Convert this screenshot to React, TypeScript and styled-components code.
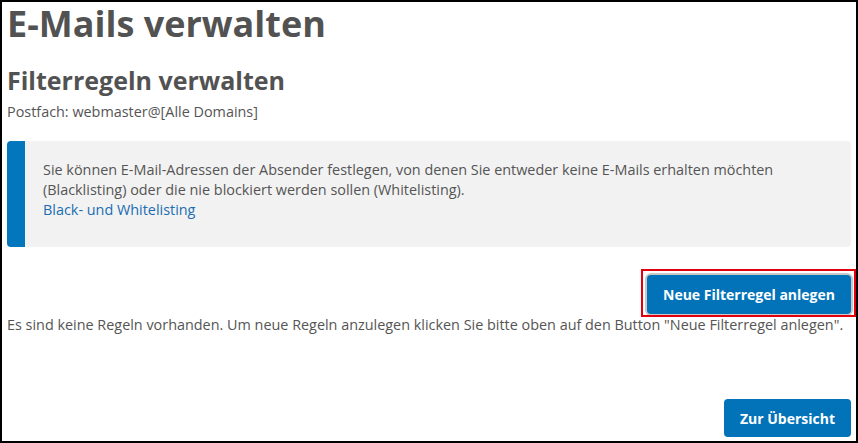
import styled, { createGlobalStyle } from 'styled-components';

const GlobalStyle = createGlobalStyle`
  html, body {
    margin: 0;
    padding: 0;
    background: #fff;
  }
  body {
    font-family: 'Open Sans', 'Noto Sans', sans-serif;
    color: #555;
  }
`;

const Frame = styled.main`
  box-sizing: border-box;
  width: 858px;
  height: 443px;
  border: 2px solid #000;
  padding: 0 5px 4px 5px;
  display: flex;
  flex-direction: column;
`;

const Title = styled.h1`
  font-size: 36px;
  font-weight: 700;
  line-height: 44px;
  color: #525252;
  margin: 0;
`;

const Subtitle = styled.h2`
  font-size: 25px;
  font-weight: 700;
  line-height: 32px;
  color: #525252;
  margin: 18px 0 0 0;
`;

const Mailbox = styled.p`
  font-size: 14.4px;
  line-height: 20px;
  margin: 6px 0 0 0;
`;

const InfoBox = styled.section`
  display: flex;
  margin-top: 19px;
  background: #f2f2f2;
  border-radius: 4px;
  overflow: hidden;
`;

const InfoBar = styled.div`
  width: 18px;
  flex: none;
  background: #0277bd;
`;

const InfoText = styled.div`
  padding: 19px 18px 27px 18px;
  font-size: 14.4px;
  line-height: 20px;
  color: #555;
`;

const InfoLink = styled.a`
  color: #1a6db3;
  text-decoration: none;
`;

const ActionRow = styled.div`
  display: flex;
  justify-content: flex-end;
  margin-top: 28px;
`;

const Highlight = styled.div`
  position: relative;
  &::after {
    content: '';
    position: absolute;
    top: -6px;
    left: -6px;
    right: -5px;
    bottom: -3px;
    border: 2px solid #e2000f;
    pointer-events: none;
  }
`;

const Button = styled.button<{ $focused?: boolean }>`
  font-family: 'Open Sans', 'Noto Sans', sans-serif;
  font-size: 14px;
  font-weight: 700;
  color: #fff;
  background: #0273b8;
  border: none;
  border-radius: 4px;
  height: ${(p) => (p.$focused ? '39px' : '38px')};
  padding: 0 16px;
  cursor: pointer;
  box-shadow: ${(p) => (p.$focused ? '0 0 0 2px #c9c9c9' : 'none')};
`;

const EmptyNote = styled.p`
  font-size: 14.4px;
  line-height: 20px;
  margin: 1px 0 0 0;
`;

const Footer = styled.div`
  margin-top: auto;
  display: flex;
  justify-content: flex-end;
`;

export default function App() {
  return (
    <>
      <GlobalStyle />
      <Frame>
        <Title>E-Mails verwalten</Title>
        <Subtitle>Filterregeln verwalten</Subtitle>
        <Mailbox>Postfach: webmaster@[Alle Domains]</Mailbox>
        <InfoBox>
          <InfoBar />
          <InfoText>
            Sie können E-Mail-Adressen der Absender festlegen, von denen Sie entweder keine E-Mails erhalten möchten
            (Blacklisting) oder die nie blockiert werden sollen (Whitelisting).
            <br />
            <InfoLink href="#">Black- und Whitelisting</InfoLink>
          </InfoText>
        </InfoBox>
        <ActionRow>
          <Highlight>
            <Button $focused>Neue Filterregel anlegen</Button>
          </Highlight>
        </ActionRow>
        <EmptyNote>
          Es sind keine Regeln vorhanden. Um neue Regeln anzulegen klicken Sie bitte oben auf den Button "Neue
          Filterregel anlegen".
        </EmptyNote>
        <Footer>
          <Button>Zur Übersicht</Button>
        </Footer>
      </Frame>
    </>
  );
}
